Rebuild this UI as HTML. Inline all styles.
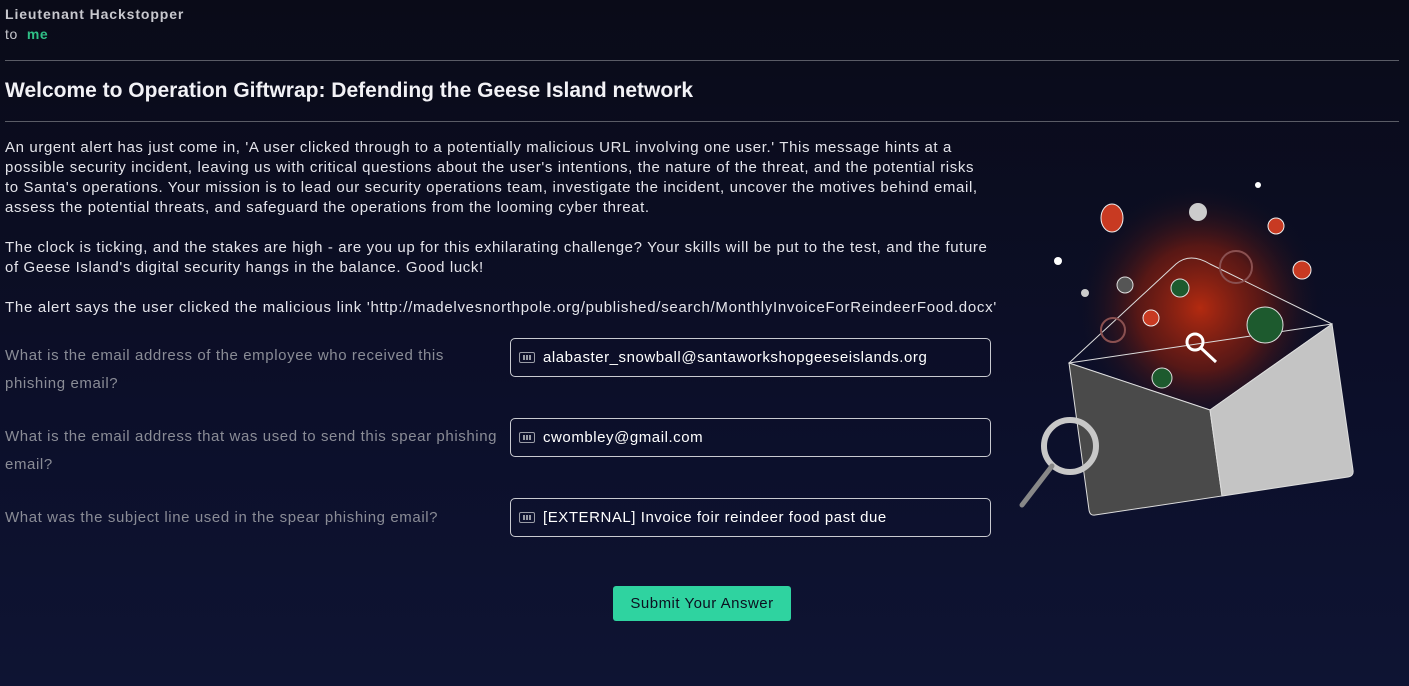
<!DOCTYPE html>
<html><head><meta charset="utf-8"><style>
html,body{margin:0;padding:0}
body{width:1409px;height:686px;overflow:hidden;background:linear-gradient(#0a0b18,#0c0f2a 60%,#0e1433);font-family:"Liberation Sans",sans-serif;color:#e6e6ea;position:relative}
.a{position:absolute;white-space:nowrap}
.hr{position:absolute;left:5px;width:1394px;height:1px;background:#5a5c66}
.p{font-size:15px;line-height:20px;color:#e4e4ea;letter-spacing:0.62px}
.q{font-size:15px;line-height:28px;color:#8a8c96;letter-spacing:0.6px}
.in{position:absolute;left:510px;width:481px;height:39px;border:1px solid #c9cad0;border-radius:5px;box-sizing:border-box}
.in span{position:absolute;left:32px;top:10px;font-size:15px;color:#fff;letter-spacing:0.55px}
.kb{position:absolute;left:8px;top:13px;width:16px;height:11px;border:1px solid #9a9ca6;border-radius:2px;box-sizing:border-box;background:repeating-linear-gradient(90deg,#9a9ca6 0 2px,transparent 2px 3px);background-clip:content-box;padding:2px}
.btn{position:absolute;left:613px;top:586px;width:178px;height:35px;background:#2fd3a0;border-radius:3px;color:#0c1020;font-size:15px;text-align:center;line-height:35px;letter-spacing:0.5px}
</style></head><body>
<div class="a" style="left:5px;top:6px;font-size:14px;font-weight:bold;color:#c8c8ce;letter-spacing:0.9px">Lieutenant Hackstopper</div>
<div class="a" style="left:5px;top:26px;font-size:14px;color:#c8c8ce;letter-spacing:0.6px">to &nbsp;<b style="color:#2fbf86;font-weight:bold">me</b></div>
<div class="hr" style="top:60px"></div>
<div class="a" style="left:5px;top:79px;font-size:21px;font-weight:bold;color:#f2f2f6;letter-spacing:0px">Welcome to Operation Giftwrap: Defending the Geese Island network</div>
<div class="hr" style="top:121px"></div>
<div class="a p" style="left:5px;top:138px">An urgent alert has just come in, 'A user clicked through to a potentially malicious URL involving one user.' This message hints at a<br>possible security incident, leaving us with critical questions about the user's intentions, the nature of the threat, and the potential risks<br>to Santa's operations. Your mission is to lead our security operations team, investigate the incident, uncover the motives behind email,<br>assess the potential threats, and safeguard the operations from the looming cyber threat.</div>
<div class="a p" style="left:5px;top:238px">The clock is ticking, and the stakes are high - are you up for this exhilarating challenge? Your skills will be put to the test, and the future<br>of Geese Island's digital security hangs in the balance. Good luck!</div>
<div class="a p" style="left:5px;top:298px;letter-spacing:0.72px">The alert says the user clicked the malicious link 'http://madelvesnorthpole.org/published/search/MonthlyInvoiceForReindeerFood.docx'</div>
<div class="a q" style="left:5px;top:342px">What is the email address of the employee who received this<br>phishing email?</div>
<div class="a q" style="left:5px;top:423px">What is the email address that was used to send this spear phishing<br>email?</div>
<div class="a q" style="left:5px;top:504px">What was the subject line used in the spear phishing email?</div>
<div class="in" style="top:338px"><i class="kb"></i><span>alabaster_snowball@santaworkshopgeeseislands.org</span></div>
<div class="in" style="top:418px"><i class="kb"></i><span>cwombley@gmail.com</span></div>
<div class="in" style="top:498px"><i class="kb"></i><span>[EXTERNAL] Invoice foir reindeer food past due</span></div>
<div class="btn">Submit Your Answer</div>
<svg class="a" style="left:1000px;top:160px" width="400" height="370" viewBox="0 0 400 370">
<defs><radialGradient id="g" cx="0.5" cy="0.5" r="0.5"><stop offset="0" stop-color="#b32a10"/><stop offset="0.5" stop-color="#6a1a12" stop-opacity="0.8"/><stop offset="1" stop-color="#0c1020" stop-opacity="0"/></radialGradient></defs>
<circle cx="200" cy="148" r="125" fill="url(#g)"/>
<path d="M69 203 L176 104 Q190 92 210 104 L332 164 L210 250 Z" fill="none" stroke="#ddd" stroke-width="1"/>
<path d="M69 203 L332 164" stroke="#ddd" stroke-width="1"/>
<path d="M69 203 L210 250 L222 336 L95 355 Q90 356 89 350 Z" fill="#4a4a4a" stroke="#ddd" stroke-width="1"/>
<path d="M210 250 L332 164 L353 310 Q354 316 348 317 L222 336 Z" fill="#c4c4c4" stroke="#ddd" stroke-width="1"/>
<circle cx="70" cy="286" r="26" fill="none" stroke="#c8c8c8" stroke-width="6"/>
<line x1="52" y1="306" x2="22" y2="345" stroke="#888" stroke-width="5" stroke-linecap="round"/>
<ellipse cx="112" cy="58" rx="11" ry="14" fill="#c83a22" stroke="#eee" stroke-width="1"/>
<circle cx="198" cy="52" r="9" fill="#ccc"/>
<circle cx="276" cy="66" r="8" fill="#c83a22" stroke="#eee"/>
<circle cx="302" cy="110" r="9" fill="#c83a22" stroke="#eee"/>
<circle cx="265" cy="165" r="18" fill="#1d5a2e" stroke="#ddd"/>
<circle cx="180" cy="128" r="9" fill="#1d5a2e" stroke="#ddd"/>
<circle cx="125" cy="125" r="8" fill="#555" stroke="#ddd"/>
<circle cx="151" cy="158" r="8" fill="#c83a22" stroke="#eee"/>
<circle cx="162" cy="218" r="10" fill="#1d5a2e" stroke="#ddd"/>
<circle cx="195" cy="182" r="8" fill="none" stroke="#fff" stroke-width="3"/>
<path d="M201 188 L216 202" stroke="#fff" stroke-width="3"/>
<circle cx="58" cy="101" r="4" fill="#fff"/><circle cx="258" cy="25" r="3" fill="#fff"/><circle cx="85" cy="133" r="4" fill="#ccc"/>
<circle cx="236" cy="107" r="16" fill="none" stroke="#8a5050" stroke-width="2"/>
<circle cx="113" cy="170" r="12" fill="none" stroke="#8a5050" stroke-width="2"/>
</svg>
</body></html>
